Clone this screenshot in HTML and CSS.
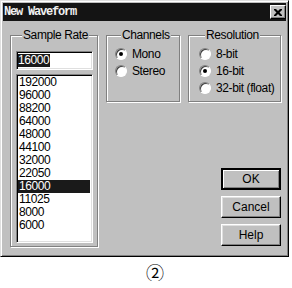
FILE: index.html
```html
<!DOCTYPE html>
<html lang="en">

<head>
    <meta charset="UTF-8">
    <title>New Waveform</title>
    <link rel="stylesheet" href="styles.css">
</head>

<body>
    <div class="dialog">
        <div class="titlebar">
            <span class="title">New Waveform</span>
            <span class="close">
                <svg width="8" height="7" viewBox="0 0 8 7">
                    <path d="M0 0h2l2 2 2-2h2v1l-2.5 2.5 2.5 2.5v1h-2l-2-2-2 2h-2v-1l2.5-2.5-2.5-2.5z" fill="#000"/>
                </svg>
            </span>
        </div>

        <div class="content">
            <fieldset class="group rate">
                <legend>Sample Rate</legend>
                <div class="edit"><span class="sel">16000</span></div>
                <ul class="list">
                    <li>192000</li>
                    <li>96000</li>
                    <li>88200</li>
                    <li>64000</li>
                    <li>48000</li>
                    <li>44100</li>
                    <li>32000</li>
                    <li>22050</li>
                    <li class="active">16000</li>
                    <li>11025</li>
                    <li>8000</li>
                    <li>6000</li>
                </ul>
            </fieldset>

            <div class="side">
                <div class="groups">
                    <fieldset class="group channels">
                        <legend>Channels</legend>
                        <div class="option"><span class="radio checked"></span>Mono</div>
                        <div class="option"><span class="radio"></span>Stereo</div>
                    </fieldset>
                    <fieldset class="group resolution">
                        <legend>Resolution</legend>
                        <div class="option"><span class="radio"></span>8-bit</div>
                        <div class="option"><span class="radio checked"></span>16-bit</div>
                        <div class="option"><span class="radio"></span>32-bit (float)</div>
                    </fieldset>
                </div>

                <div class="buttons">
                    <button class="btn default">OK</button>
                    <button class="btn">Cancel</button>
                    <button class="btn">Help</button>
                </div>
            </div>
        </div>
    </div>

    <div class="caption">②</div>
</body>

</html>
```

FILE: styles.css
```css
body {
    margin: 0;
    background: #fff;
    font-family: "Liberation Sans", Arial, sans-serif;
    font-size: 12px;
    letter-spacing: -0.4px;
    color: #000;
}

.dialog {
    width: 289px;
    height: 257px;
    box-sizing: border-box;
    padding: 2px;
    background: #c0c0c0;
    border: 1px solid;
    border-color: #dfdfdf #000 #000 #dfdfdf;
    box-shadow: inset 1px 1px #fff, inset -1px -1px #808080;
}

.titlebar {
    height: 18px;
    display: flex;
    align-items: center;
    justify-content: space-between;
    padding-left: 1px;
    background: #141414;
}

.title {
    font-family: "Liberation Mono", monospace;
    font-weight: bold;
    font-size: 12px;
    letter-spacing: -1.2px;
    color: #f0f0f0;
}

.close {
    width: 16px;
    height: 14px;
    box-sizing: border-box;
    display: flex;
    align-items: center;
    justify-content: center;
    background: #c0c0c0;
    border: 1px solid;
    border-color: #fff #000 #000 #fff;
    box-shadow: inset -1px -1px #808080;
}

.content {
    display: flex;
    gap: 8px;
    padding: 7px 0 0 7px;
}

.group {
    margin: 0;
    min-width: 0;
    box-sizing: border-box;
    border: 1px solid #808080;
    box-shadow: inset 1px 1px #fff, 1px 1px #fff;
}

.group legend {
    margin-left: 6px;
    padding: 0 1px;
    line-height: 14px;
    white-space: nowrap;
    background: #c0c0c0;
}

.rate {
    width: 88px;
    height: 219px;
    padding: 9px 4px 0 5px;
}

.edit,
.list {
    box-sizing: border-box;
    background: #fff;
    border: 1px solid;
    border-color: #808080 #fff #fff #808080;
    box-shadow: inset 1px 1px #000, inset -1px -1px #dfdfdf;
}

.edit {
    height: 19px;
    padding: 2px 0 0 1px;
    line-height: 13px;
}

.sel {
    display: inline-block;
    padding-right: 1px;
    background: #1a1a1a;
    color: #fff;
}

.list {
    height: 169px;
    margin: 4px 0 0;
    padding: 1px 0 0 1px;
    list-style: none;
    overflow: hidden;
}

.list li {
    line-height: 13px;
    padding-left: 1px;
    margin-right: 2px;
}

.list li.active {
    background: #1a1a1a;
    color: #fff;
}

.side {
    width: 175px;
}

.groups {
    display: flex;
    gap: 8px;
}

.channels,
.resolution {
    height: 74px;
    padding-top: 3px;
}

.channels {
    width: 74px;
    padding-left: 8px;
}

.resolution {
    width: 93px;
    padding-left: 10px;
}

.option {
    height: 17px;
    display: flex;
    align-items: center;
    gap: 5px;
    white-space: nowrap;
}

.radio {
    flex: none;
    width: 12px;
    height: 12px;
    box-sizing: border-box;
    border-radius: 50%;
    background: #fff;
    border: 1px solid;
    border-color: #808080 #fff #fff #808080;
    box-shadow: inset 1px 1px #404040;
    display: flex;
    align-items: center;
    justify-content: center;
}

.radio.checked::after {
    content: "";
    width: 4px;
    height: 4px;
    border-radius: 50%;
    background: #000;
}

.buttons {
    display: flex;
    flex-direction: column;
    align-items: flex-end;
    gap: 6px;
    margin-top: 66px;
}

.btn {
    width: 60px;
    height: 22px;
    padding: 0;
    font: inherit;
    color: #000;
    background: #c0c0c0;
    border: 1px solid;
    border-color: #fff #000 #000 #fff;
    box-shadow: inset -1px -1px #808080, inset 1px 1px #dfdfdf;
}

.btn.default {
    border: 2px solid;
    border-color: #000;
    box-shadow: inset 1px 1px #fff, inset -1px -1px #808080;
}

.caption {
    padding-left: 146px;
    margin-top: 6px;
    font-family: "Noto Sans CJK SC", sans-serif;
    font-size: 18px;
    line-height: 18px;
}
```
